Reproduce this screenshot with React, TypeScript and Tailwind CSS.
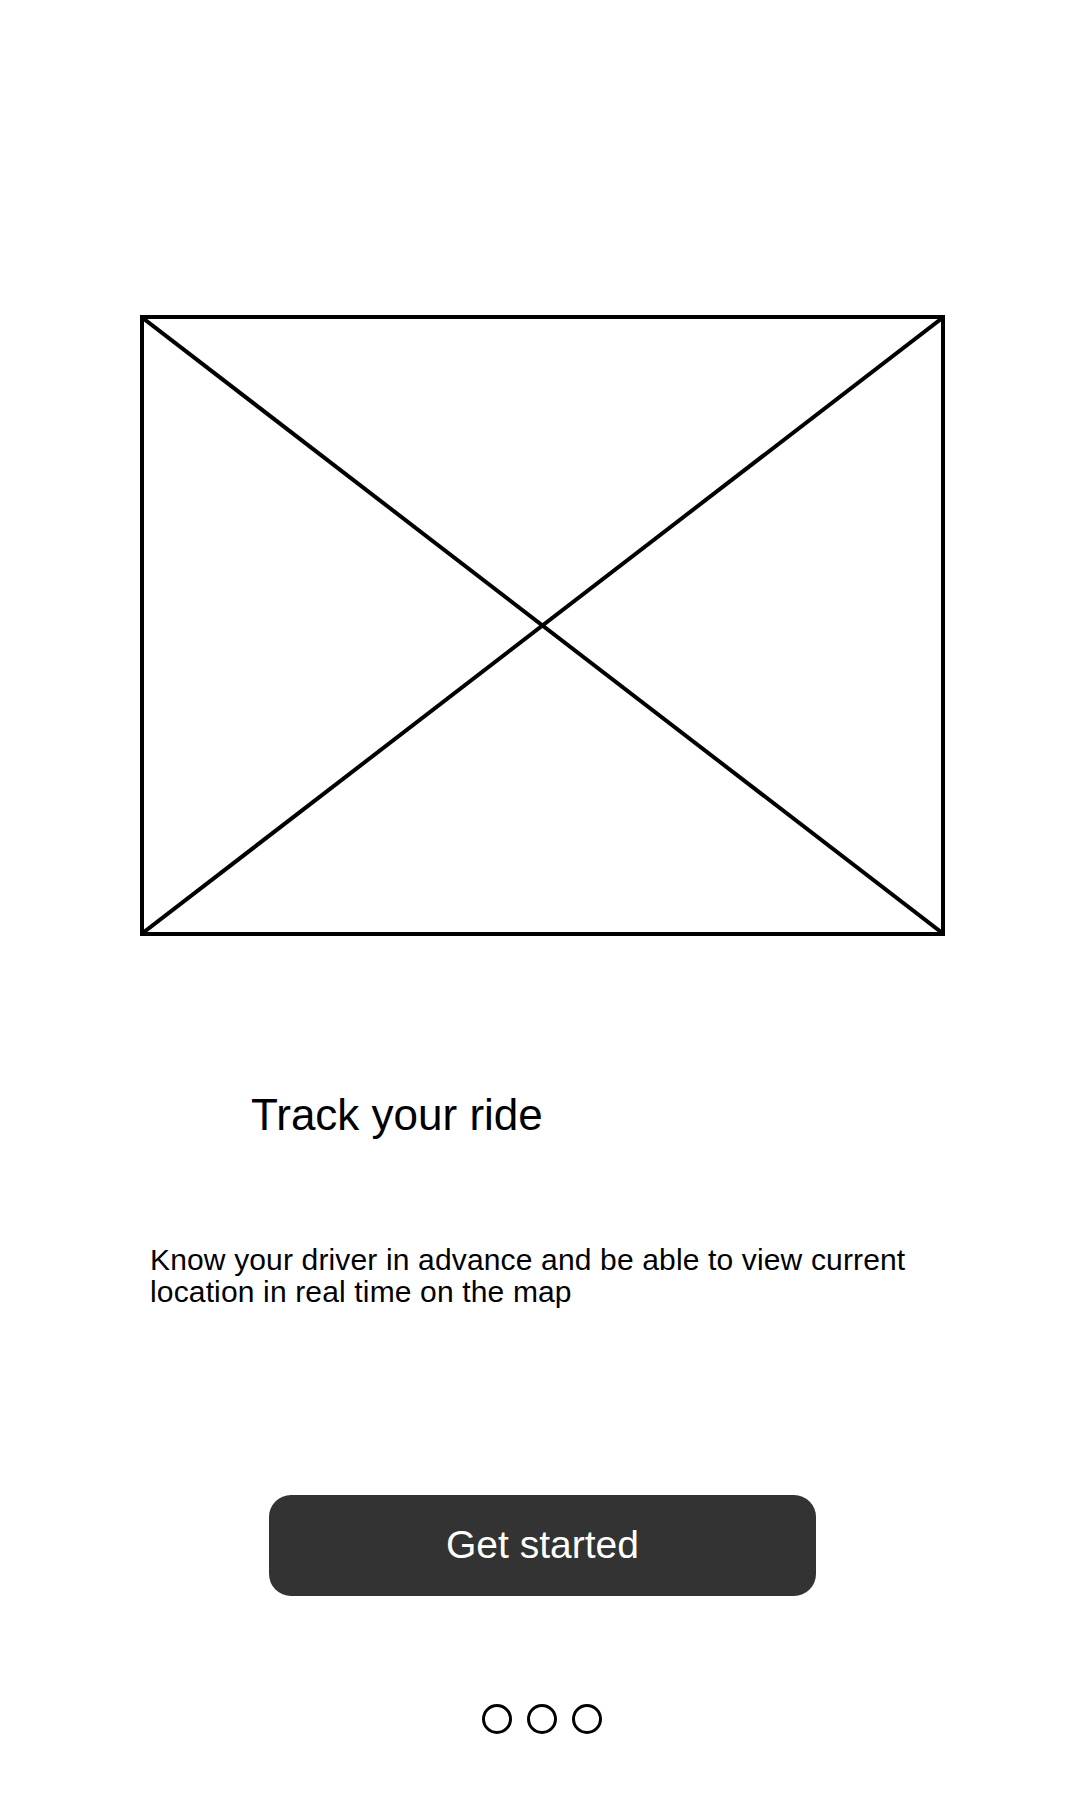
import React from 'react';

function PlaceholderImage() {
    return (
        <div className="relative ml-[140px] mt-[315px] h-[621px] w-[805px] border-4 border-black">
            {/* the crossed-out picture frame */}
            <svg className="absolute inset-0 h-full w-full" viewBox="0 0 100 100" preserveAspectRatio="none">
                <line x1="0" y1="0" x2="100" y2="100" stroke="#000" strokeWidth="4" vectorEffect="non-scaling-stroke" />
                <line x1="100" y1="0" x2="0" y2="100" stroke="#000" strokeWidth="4" vectorEffect="non-scaling-stroke" />
            </svg>
        </div>
    );
}

export default function App() {
    return (
        <div className="min-h-[1800px] w-[1080px] bg-white font-['Liberation_Sans',Arial,sans-serif] text-black">
            <div className="pt-px -mt-px">
                <PlaceholderImage />

                <h1 className="ml-[251px] mt-[157px] text-[44px] leading-[44px] font-normal">Track your ride</h1>

                <p className="ml-[150px] mt-[107px] text-[30px] leading-[32px] tracking-[0.15px]">
                    <span className="block whitespace-nowrap">Know your driver in advance and be able to view current</span>
                    <span className="block whitespace-nowrap">location in real time on the map</span>
                </p>

                <button className="ml-[269px] mt-[187px] flex h-[101px] w-[547px] items-center justify-center rounded-[22px] bg-[#333333] text-[39px] text-white">
                    Get started
                </button>

                <div className="mt-[108px] ml-[482px] flex gap-[15px]">
                    <span className="h-[30px] w-[30px] rounded-full border-[3px] border-black" />
                    <span className="h-[30px] w-[30px] rounded-full border-[3px] border-black" />
                    <span className="h-[30px] w-[30px] rounded-full border-[3px] border-black" />
                </div>
            </div>
        </div>
    );
}
